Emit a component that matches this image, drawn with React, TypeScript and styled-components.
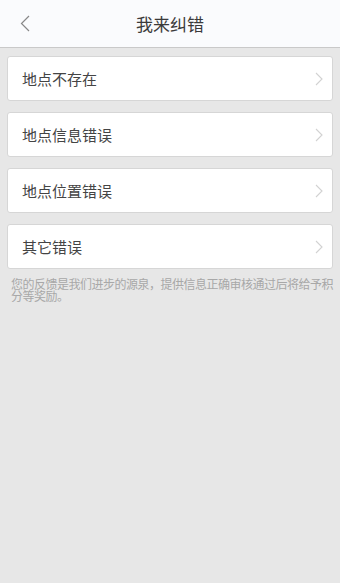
import React from 'react';
import styled, { createGlobalStyle } from 'styled-components';

const GlobalStyle = createGlobalStyle`
  html, body {
    margin: 0;
    padding: 0;
    background: #e7e7e7;
    font-family: "Noto Sans CJK SC", "Noto Sans", sans-serif;
  }
`;

const Page = styled.div`
  width: 340px;
  min-height: 583px;
  background: #e7e7e7;
`;

const Header = styled.div`
  position: relative;
  height: 47px;
  display: flex;
  align-items: center;
  justify-content: center;
  background: #fafbfd;
  border-bottom: 1px solid #c9c9c9;
`;

const BackButton = styled.button`
  position: absolute;
  left: 14px;
  top: 12px;
  width: 22px;
  height: 22px;
  padding: 0;
  border: none;
  background: none;
  display: flex;
  align-items: center;
  justify-content: center;
`;

const Title = styled.h1`
  margin: 0;
  font-size: 17px;
  font-weight: 400;
  color: #3a3a3a;
`;

const List = styled.div`
  display: flex;
  flex-direction: column;
  gap: 11px;
  padding: 8px 7px 0;
`;

const Item = styled.div`
  height: 43px;
  display: flex;
  align-items: center;
  justify-content: space-between;
  padding: 0 9px 0 14px;
  background: #fff;
  border: 1px solid #d6d6d6;
  border-radius: 3px;
`;

const Label = styled.span`
  font-size: 15px;
  color: #444;
`;

const Note = styled.p`
  margin: 9px 2px 0 11px;
  font-size: 12px;
  letter-spacing: -0.5px;
  line-height: 12px;
  color: #a8a8a8;
`;

const items = ['地点不存在', '地点信息错误', '地点位置错误', '其它错误'];

const App: React.FC = () => (
  <Page>
    <GlobalStyle />
    <Header>
      <BackButton aria-label="返回">
        <svg width="10" height="17" viewBox="0 0 10 17">
          <path d="M9 1 L1.5 8.5 L9 16" fill="none" stroke="#888" strokeWidth="1.2" />
        </svg>
      </BackButton>
      <Title>我来纠错</Title>
    </Header>
    <List>
      {items.map((t) => (
        <Item key={t}>
          <Label>{t}</Label>
          <svg width="8" height="14" viewBox="0 0 8 14">
            <path d="M1 1 L7 7 L1 13" fill="none" stroke="#d2d2d2" strokeWidth="1.1" />
          </svg>
        </Item>
      ))}
    </List>
    <Note>您的反馈是我们进步的源泉，提供信息正确审核通过后将给予积分等奖励。</Note>
  </Page>
);

export default App;
